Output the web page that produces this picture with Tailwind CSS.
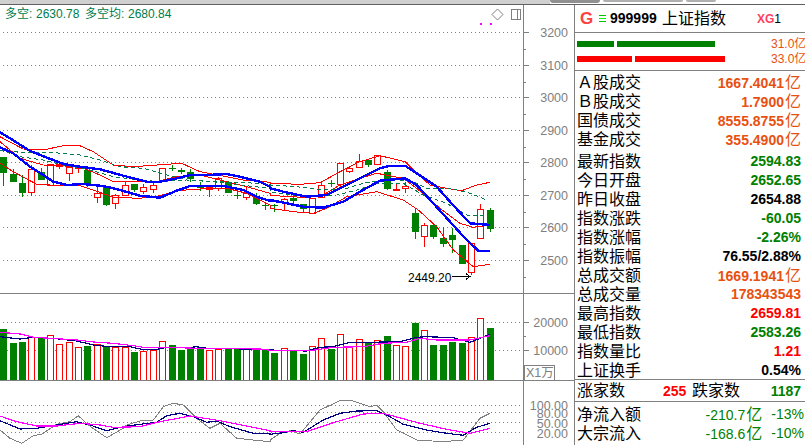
<!DOCTYPE html>
<html lang="en">
<head>
  <meta charset="UTF-8" />
  <title>上证指数</title>
  <script src="https://cdn.jsdelivr.net/npm/@tailwindcss/browser@4"></script>
</head>
<body class="w-[805px] h-[445px] overflow-hidden bg-white text-black font-['Liberation_Sans','Noto_Sans_CJK_SC',sans-serif]">

  <!-- top strip -->
  <div class="flex h-[5px] border-b border-[#606060]">
    <div class="w-[550px] bg-[#d0d0d0]"></div>
    <div class="flex-1 flex gap-[3px] items-start">
      <div class="w-[50px] h-[3px] bg-[#909090] rounded-b-sm"></div>
      <div class="w-[80px] h-[2px] bg-[#b0b0b0] rounded-b-sm"></div>
      <div class="w-[30px] h-[2px] bg-[#b0b0b0] rounded-b-sm"></div>
    </div>
  </div>

  <div class="flex h-[440px]">
    <!-- chart column -->
    <div class="w-[574px] flex flex-col">
      <svg id="price" class="block w-[574px] h-[288px]" viewBox="0 5 574 288"></svg>
      <div class="h-px bg-[#808080]"></div>
      <svg id="volume" class="block w-[574px] h-[86px]" viewBox="0 294 574 86"></svg>
      <div class="h-px bg-[#808080]"></div>
      <svg id="kdj" class="block w-[574px] h-[64px]" viewBox="0 381 574 64"></svg>
    </div>

    <!-- quote panel -->
    <div class="w-[231px] border-l border-[#808080] flex flex-col">
      <div class="h-[28px] flex items-center border-b border-[#808080] pl-[5px]">
        <span class="w-[18px] text-[17px] font-bold text-[#ff4040]">G</span>
        <span class="w-[10px] flex flex-col gap-[2px] mr-[2px] pl-[1px]">
          <span class="block w-[7px] h-px bg-[#00c000]"></span>
          <span class="block w-[7px] h-px bg-[#00ff00]"></span>
          <span class="block w-[7px] h-px bg-[#00c000]"></span>
        </span>
        <span class="text-[14px] font-bold w-[52px]">999999</span>
        <span class="text-[16px] leading-none w-[95px]">上证指数</span>
        <span class="text-[12px] font-bold text-[#ff4060]">XG</span><span class="text-[12px]">1</span>
      </div>

      <div class="h-[38px] border-b border-[#808080] pl-[2px] pt-[8px] flex flex-col gap-[9px] relative">
        <div class="flex gap-[3px] h-[6px]">
          <div class="w-[37px] bg-[#008000]"></div>
          <div class="w-[98px] bg-[#008000]"></div>
        </div>
        <div class="flex gap-[3px] h-[6px]">
          <div class="w-[55px] bg-[#ff0000]"></div>
          <div class="w-[90px] bg-[#ff0000]"></div>
        </div>
        <span class="absolute left-[196px] top-[4px] text-[12px] leading-[14px] text-[#e85010] whitespace-nowrap">31.0亿</span>
        <span class="absolute left-[196px] top-[19px] text-[12px] leading-[14px] text-[#e85010] whitespace-nowrap">33.0亿</span>
      </div>

      <div class="pt-[2px] pl-[2px] pr-[4px] h-[309px] border-b border-[#808080] text-[16px] leading-[19px]">
        <div class="flex justify-between h-[19px]"><span>Ａ股成交</span><b class="text-[14px] text-[#e85010]">1667.4041<span class="text-[16px] font-normal ml-px">亿</span></b></div>
        <div class="flex justify-between h-[19px]"><span>Ｂ股成交</span><b class="text-[14px] text-[#e85010]">1.7900<span class="text-[16px] font-normal ml-px">亿</span></b></div>
        <div class="flex justify-between h-[19px]"><span>国债成交</span><b class="text-[14px] text-[#e85010]">8555.8755<span class="text-[16px] font-normal ml-px">亿</span></b></div>
        <div class="flex justify-between h-[19px] mb-[3px]"><span>基金成交</span><b class="text-[14px] text-[#e85010]">355.4900<span class="text-[16px] font-normal ml-px">亿</span></b></div>
        <div class="flex justify-between h-[19px]"><span>最新指数</span><b class="text-[14px] text-[#008000]">2594.83</b></div>
        <div class="flex justify-between h-[19px]"><span>今日开盘</span><b class="text-[14px] text-[#008000]">2652.65</b></div>
        <div class="flex justify-between h-[19px]"><span>昨日收盘</span><b class="text-[14px]">2654.88</b></div>
        <div class="flex justify-between h-[19px]"><span>指数涨跌</span><b class="text-[14px] text-[#008000]">-60.05</b></div>
        <div class="flex justify-between h-[19px]"><span>指数涨幅</span><b class="text-[14px] text-[#008000]">-2.26%</b></div>
        <div class="flex justify-between h-[19px]"><span>指数振幅</span><b class="text-[14px]">76.55/2.88%</b></div>
        <div class="flex justify-between h-[19px]"><span>总成交额</span><b class="text-[14px] text-[#e85010]">1669.1941<span class="text-[16px] font-normal ml-px">亿</span></b></div>
        <div class="flex justify-between h-[19px]"><span>总成交量</span><b class="text-[14px] text-[#e85010]">178343543</b></div>
        <div class="flex justify-between h-[19px]"><span>最高指数</span><b class="text-[14px] text-[#ff0000]">2659.81</b></div>
        <div class="flex justify-between h-[19px]"><span>最低指数</span><b class="text-[14px] text-[#008000]">2583.26</b></div>
        <div class="flex justify-between h-[19px]"><span>指数量比</span><b class="text-[14px] text-[#ff0000]">1.21</b></div>
        <div class="flex justify-between h-[19px]"><span>上证换手</span><b class="text-[14px]">0.54%</b></div>
      </div>

      <div class="h-[22px] flex items-center border-b border-[#808080] pt-px pl-[2px] pr-[4px] text-[16px]">
        <span class="w-[86px]">涨家数</span>
        <b class="w-[29px] text-[14px] text-[#ff0000]">255</b>
        <span class="flex-1">跌家数</span>
        <b class="text-[14px] text-[#008000]">1187</b>
      </div>

      <div class="pt-[3px] pl-[2px] pr-px text-[16px] leading-[19px]">
        <div class="flex h-[19px]"><span class="w-[131px]">净流入额</span><span class="w-[67px] text-[14px] text-[#008000]">-210.7<span class="text-[16px] ml-px">亿</span></span><span class="text-[14px] text-[#008000]">-13%</span></div>
        <div class="flex h-[19px]"><span class="w-[131px]">大宗流入</span><span class="w-[67px] text-[14px] text-[#008000]">-168.6<span class="text-[16px] ml-px">亿</span></span><span class="text-[14px] text-[#008000]">-10%</span></div>
      </div>
    </div>
  </div>

  <script>
    const GRAY = '#808080', RED = '#ff0000', GREEN = '#008000', BLUE = '#0000ff', NAVY = '#000080', PINK = '#ff00ff', DASH = '#007b4b';

    const lefts = [0,10,19,28,38,47,56,66,75,84,94,103,112,122,131,140,150,159,169,178,187,197,206,215,225,234,243,253,262,271,281,290,300,309,318,328,337,346,356,365,374,384,393,402,412,421,430,440,449,459,468,477,487];

    // colour, high, body top, body bottom, low
    const candles = [
      'G',157,157,173,186, 'G',169,174,182,182, 'G',175,183,193,197, 'R',165,169,192,196, 'G',168,172,180,180,
      'R',164,164,185,185, 'R',163,164,166,169, 'R',164,167,173,181, 'R',165,166,168,173, 'G',167,170,185,187,
      'R',187,193,197,203, 'G',187,187,205,206, 'R',194,195,203,209, 'R',182,185,195,195, 'G',184,184,190,192,
      'R',184,187,191,194, 'R',181,185,189,193, 'R',168,168,180,182, 'G',165,168,168,171, 'G',168,170,172,174,
      'G',169,172,179,182, 'G',182,187,187,191, 'R',185,187,189,197, 'R',177,178,188,191, 'G',181,182,193,193,
      'G',190,195,196,199, 'R',187,193,197,200, 'G',193,196,204,205, 'G',202,205,205,210, 'G',204,205,205,212,
      'R',198,199,202,211, 'G',196,198,201,203, 'G',204,204,209,212, 'R',198,198,213,213, 'R',182,185,197,198,
      'G',180,183,183,187, 'R',163,163,184,187, 'R',166,168,171,173, 'R',154,161,167,167, 'G',159,160,165,167,
      'R',155,155,164,164, 'G',170,172,189,190, 'R',183,189,190,190, 'R',182,186,188,193, 'G',208,213,232,239,
      'R',223,225,236,247, 'G',223,225,237,239, 'G',227,238,244,247, 'G',228,235,240,253, 'G',245,245,264,264,
      'R',243,243,272,275, 'R',204,209,238,238, 'G',208,210,229,232
    ];

    const volumes = ['G',329,'G',343,'G',342,'R',337,'G',338,'R',335,'R',344,'R',342,'R',347,'G',346,'R',344,'G',347,'R',347,'R',347,'G',352,'R',351,'R',350,'R',341,'G',345,'G',350,'G',348,'G',347,'R',350,'R',349,'G',349,'G',349,'R',349,'G',349,'G',350,'G',353,'R',348,'G',351,'G',354,'R',346,'R',338,'G',349,'R',334,'R',347,'R',339,'G',343,'R',340,'G',336,'R',345,'R',346,'G',323,'R',330,'G',345,'G',345,'G',342,'G',343,'R',337,'R',318,'G',328];

    // points read off 3x crops: [crop x, crop y] pairs, turned into page pixels by pts()
    const pts = (a, ox, oy) => { let s = ''; for (let i = 0; i < a.length; i += 2) s += (ox + a[i] / 3).toFixed(1) + ',' + (oy + a[i + 1] / 3).toFixed(1) + ' '; return s; };
    const line = (p, color, w, extra = '') => `<polyline points="${p}" fill="none" stroke="${color}" stroke-width="${w}" stroke-linejoin="round" ${extra}/>`;
    const dotted = (y) => `<line x1="3" x2="523" y1="${y + .5}" y2="${y + .5}" stroke="${GRAY}" stroke-dasharray="1 3" shape-rendering="crispEdges"/>`;
    const tick = (y, len) => `<rect x="523" y="${y}" width="${len}" height="1" fill="${GRAY}"/>`;
    const label = (y, t) => `<text x="568" y="${y + 4.5}" text-anchor="end" font-size="12.5" fill="${GRAY}">${t}</text>`;
    const axis = (y, h) => `<rect x="523" y="${y}" width="1" height="${h}" fill="${GRAY}"/>`;

    // price panel
    let s = '';
    [32, 65, 97, 130, 162, 195, 227, 260].forEach((y, i) => {
      s += dotted(y) + tick(y, 6) + label(y, 3200 - i * 100);
      s += tick(y + 17, 3);
    });
    s += axis(5, 288);
    s += `<g shape-rendering="crispEdges">`;
    for (let i = 0; i < lefts.length; i++) {
      const [c, hi, top, bot, lo] = candles.slice(i * 5, i * 5 + 5);
      const l = lefts[i], col = c == 'R' ? RED : GREEN;
      s += `<line x1="${l + 3.5}" x2="${l + 3.5}" y1="${hi}" y2="${lo}" stroke="${col}"/>`;
      if (c == 'R') s += `<rect x="${l + .5}" y="${top + .5}" width="6" height="${bot - top}" fill="#fff" stroke="${col}"/>`;
      else s += `<rect x="${l}" y="${top}" width="7" height="${Math.max(bot - top, 1)}" fill="${col}"/>`;
    }
    // bands
    s += line(pts([0,35,70,72,130,75,190,62,235,60,280,80,340,120,400,125,470,120,545,115,600,140,680,155,730,165,810,172], 0, 125) + pts([0,130,90,133,150,128,220,90,270,65,330,47,405,65,440,100,480,135,530,145,575,152,620,135,660,127], 270, 140), RED, 1);
    s += line(pts([0,50,60,100,130,120,240,125,300,150,340,170,420,170,470,170,530,155,600,150,680,170,740,185,810,205], 0, 125) + pts([0,165,50,170,110,172,160,165,210,135,270,115,320,100,400,115,440,145,510,205,570,250,610,262,660,255], 270, 140), RED, 1);
    s += line(pts([0,115,40,140,110,178,190,182,235,180,280,195,340,217,420,220,480,212,530,197,600,192,680,190,740,205,810,240], 0, 125) + pts([0,205,70,215,130,220,170,205,230,170,320,155,400,180,445,210,500,260,550,330,610,380,660,373], 270, 140), RED, 1);
    // dashed averages
    s += line(pts([0,75,60,82,150,82,240,90,300,105,360,125,430,130,500,150,560,165,640,170,720,172,810,178], 0, 125) + pts([0,135,80,140,160,150,230,145,280,130,350,117,430,125,470,145,540,145,600,160,650,180], 270, 140), DASH, 1, 'stroke-dasharray="4 3"');
    s += line(pts([0,75,60,95,130,105,190,120,270,135,340,155,420,165,480,170,560,165,640,170,720,180,810,190], 0, 125) + pts([0,155,60,165,120,170,200,165,260,150,320,130,400,130,460,165,530,190,590,225,650,225], 270, 140), DASH, 1, 'stroke-dasharray="4 3"');
    // thick moving averages
    s += line(pts([0,22,30,40,90,78,190,117,240,125,300,133,370,152,440,170,480,170,530,160,570,150,620,150,680,147,720,155,780,170,810,185], 0, 125) + pts([0,145,40,155,110,170,170,165,210,145,270,115,330,85,360,77,405,77,440,100,500,140,540,185,600,250,660,255], 270, 140), BLUE, 2.4);
    s += line(pts([0,67,40,85,90,125,130,150,160,170,200,180,250,177,310,183,360,195,420,212,480,218,530,197,570,183,670,183,730,195,770,215,810,228], 0, 125) + pts([0,180,50,190,100,200,160,203,220,185,270,155,330,122,405,115,440,135,490,190,540,245,590,300,625,332,660,332], 270, 140), BLUE, 2.4);
    s += `</g>`;
    // legend, icons, low marker
    s += `<text y="18" font-size="12" fill="${DASH}"><tspan x="5">多空:</tspan><tspan x="36">2630.78</tspan><tspan x="85">多空均:</tspan><tspan x="128">2680.84</tspan></text>`;
    s += `<polygon points="497.5,9 503,14.5 497.5,20 492,14.5" fill="none" stroke="${GRAY}"/>`;
    s += `<g fill="none" stroke="${GRAY}" shape-rendering="crispEdges"><rect x="511.5" y="9.5" width="9" height="10"/><line x1="517.5" x2="517.5" y1="9.5" y2="19.5"/></g>`;
    s += `<rect x="480" y="23" width="2" height="2" fill="${PINK}"/><rect x="490" y="23" width="2" height="2" fill="${PINK}"/>`;
    s += `<text x="408" y="282" font-size="12" fill="#000">2449.20</text>`;
    s += `<path d="M452 276.5H470M466 273.5L470 276.5L466 279.5" fill="none" stroke="#000" shape-rendering="crispEdges"/>`;
    document.getElementById('price').innerHTML = s;

    // volume panel
    s = dotted(322) + dotted(350) + tick(322, 6) + tick(350, 6) + tick(336, 3) + tick(365, 3) + axis(294, 86);
    s += label(322, 20000) + label(350, 10000);
    s += `<rect x="524.5" y="365.5" width="30" height="14.5" fill="#fff" stroke="${GRAY}" shape-rendering="crispEdges"/><text x="526" y="377" font-size="12.5" fill="${GRAY}">X1万</text>`;
    s += `<g shape-rendering="crispEdges">`;
    for (let i = 0; i < lefts.length; i++) {
      const l = lefts[i], c = volumes[i * 2], top = volumes[i * 2 + 1];
      if (c == 'R') s += `<rect x="${l + .5}" y="${top + .5}" width="6" height="${380 - top}" fill="#fff" stroke="${RED}"/>`;
      else s += `<rect x="${l}" y="${top}" width="7" height="${380 - top}" fill="${GREEN}"/>`;
    }
    s += line(pts([0,140,60,147,100,142,180,147,230,153,280,165,330,170,390,170,425,178,470,178,500,172,560,173,590,170,620,175,780,178], 0, 290) + pts([0,180,110,183,150,172,190,170,240,157,300,157,390,155,440,142,470,140,550,143,600,157,660,133], 270, 290), NAVY, 1.2);
    s += line(pts([0,127,60,132,100,142,170,146,230,150,290,157,340,160,400,167,430,172,500,172,590,175,780,177], 0, 290) + pts([0,181,120,182,190,172,280,170,340,160,410,157,450,145,500,150,600,150,660,137], 270, 290), PINK, 1.2);
    s += `</g>`;
    document.getElementById('volume').innerHTML = s;

    // indicator panel
    s = [405, 412, 422, 432].map(dotted).join('') + axis(381, 64);
    s += label(405, '100.00') + label(413, '80.00') + label(423, '50.00') + label(433, '20.00');
    s += `<g shape-rendering="crispEdges">`;
    s += line(pts([0,420,30,445,65,460,100,437,125,433,170,403,210,395,235,377,265,405,320,443,370,415,380,405,420,393,460,390,490,350,520,340,550,345,590,385,630,415,660,400,710,445,760,450,810,455], 0, 290) + pts([0,450,30,430,60,422,90,432,150,360,210,332,250,333,300,350,320,345,340,365,380,420,440,450,520,455,580,450,630,385,660,370], 270, 290), GRAY, 1);
    s += line(pts([0,392,60,417,110,415,170,405,230,395,270,405,320,422,370,410,420,403,470,397,500,377,540,370,580,380,620,397,650,393,690,410,760,430,810,430], 0, 290) + pts([0,433,40,428,70,422,100,427,160,390,210,370,260,363,320,362,350,375,400,403,470,420,530,430,580,436,620,412,660,400], 270, 290), NAVY, 1.2);
    s += line(pts([0,378,50,395,110,408,170,408,240,400,300,405,340,412,420,410,480,395,570,378,660,392,810,422], 0, 290) + pts([0,425,110,425,200,395,280,372,340,370,450,400,530,418,600,430,660,415], 270, 290), PINK, 1.2);
    s += `</g>`;
    document.getElementById('kdj').innerHTML = s;
  </script>
</body>
</html>
